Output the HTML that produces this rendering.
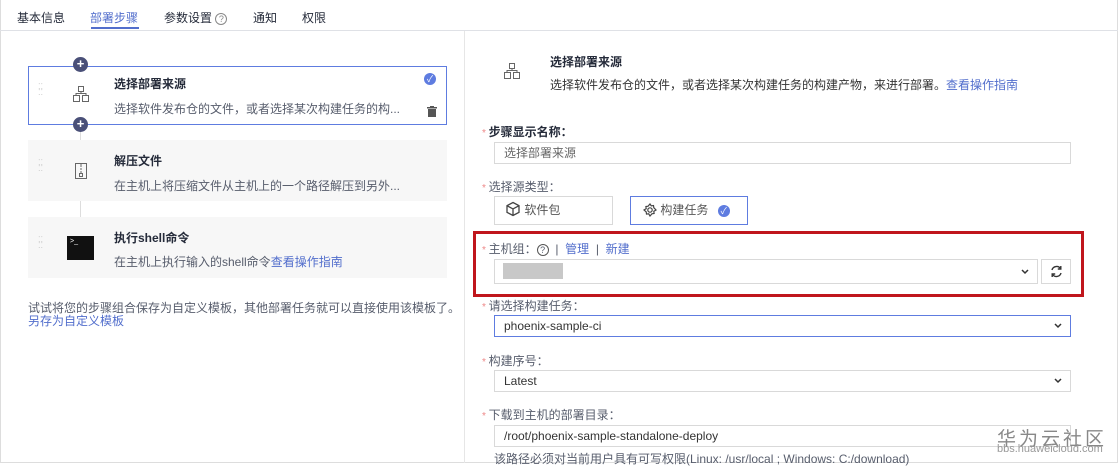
<!DOCTYPE html>
<html><head><meta charset="utf-8"><style>
*{box-sizing:border-box;margin:0;padding:0}
body{width:1118px;height:463px;overflow:hidden;background:#fff;font-family:"Liberation Sans","Noto Sans CJK SC",sans-serif;font-size:12px;color:#252b3a;position:relative}
.a{position:absolute;white-space:nowrap}
.tab{top:9px;font-size:12px;color:#252b3a}
.g{color:#575d6c}
.bl{color:#526ecc}
.inp{position:absolute;border:1px solid #d9d9d9;height:22px;background:#fff;padding-left:9px;line-height:20px;color:#333;font-size:12px}
.star{color:#e88;font-size:10px}
.lab{font-size:12px;color:#575d6c}
.chev{position:absolute;right:8px;top:50%;margin-top:-3px}
</style></head><body>
<div class="a" style="left:0;top:0;width:1118px;height:463px;border:1px solid #ddd;border-top:none"></div>
<div class="a tab" style="left:17px">基本信息</div>
<div class="a tab" style="left:90px;color:#526ecc">部署步骤</div>
<div class="a" style="left:91px;top:27px;width:48px;height:2px;background:#526ecc"></div>
<div class="a tab" style="left:164px">参数设置 <span style="display:inline-block;width:12px;height:12px;border:1px solid #888;border-radius:50%;font-size:9px;line-height:10px;text-align:center;color:#888">?</span></div>
<div class="a tab" style="left:253px">通知</div>
<div class="a tab" style="left:302px">权限</div>
<div class="a" style="left:0;top:30px;width:1118px;height:1px;background:#dfe1e6"></div>
<div class="a" style="left:464px;top:31px;width:1px;height:432px;background:#e6e6e6"></div>

<div class="a" style="left:80px;top:124px;width:1px;height:93px;background:#ddd"></div>
<div class="a" style="left:28px;top:66px;width:419px;height:59px;border:1px solid #5e7ce0;background:#fff"></div>
<div class="a" style="left:28px;top:140px;width:419px;height:61px;background:#f7f7f7"></div>
<div class="a" style="left:28px;top:217px;width:419px;height:61px;background:#f7f7f7"></div>
<div class="a" style="left:73px;top:57px;width:15px;height:15px;border-radius:50%;background:#4a5078;color:#fff;font-size:13px;line-height:14px;text-align:center;font-weight:bold">+</div>
<div class="a" style="left:73px;top:117px;width:15px;height:15px;border-radius:50%;background:#4a5078;color:#fff;font-size:13px;line-height:14px;text-align:center;font-weight:bold">+</div>
<div class="a" style="left:38px;top:84px;color:#ccc;font-size:8px;line-height:6px">⁚⁚<br>⁚⁚</div>
<div class="a" style="left:38px;top:160px;color:#ccc;font-size:8px;line-height:6px">⁚⁚<br>⁚⁚</div>
<div class="a" style="left:38px;top:237px;color:#ccc;font-size:8px;line-height:6px">⁚⁚<br>⁚⁚</div>
<svg class="a" style="left:72px;top:85px" width="18" height="18" viewBox="0 0 18 18" fill="none" stroke="#666"><rect x="6.5" y="1.5" width="5" height="5"/><rect x="1.5" y="10.5" width="6" height="6"/><rect x="10.5" y="10.5" width="6" height="6"/><path d="M9 6.5v2M4 10.5V8.5h10v2"/></svg>
<svg class="a" style="left:74px;top:162px" width="14" height="18" viewBox="0 0 14 18" fill="none" stroke="#666"><rect x="1.5" y="1.5" width="11" height="15"/><path d="M7 2v3M7 6v2M7 9v2" /><rect x="5.5" y="11.5" width="3" height="3"/></svg>
<div class="a" style="left:67px;top:236px;width:27px;height:24px;background:#111;color:#fff;font-size:7px;padding:2px 3px">&gt;_</div>
<div class="a" style="left:114px;top:75px;font-weight:bold">选择部署来源</div>
<div class="a g" style="left:114px;top:100px">选择软件发布仓的文件，或者选择某次构建任务的构...</div>
<div class="a" style="left:424px;top:73px;width:12px;height:12px;border-radius:50%;background:#5e7ce0;color:#fff;font-size:9px;line-height:12px;text-align:center">✓</div>
<svg class="a" style="left:427px;top:106px" width="10" height="11" viewBox="0 0 10 11"><rect x="0" y="1" width="10" height="1.5" fill="#555"/><rect x="3" y="0" width="4" height="1.5" fill="#555"/><rect x="1" y="3" width="8" height="8" fill="#555"/></svg>
<div class="a" style="left:114px;top:152px;font-weight:bold">解压文件</div>
<div class="a g" style="left:114px;top:177px">在主机上将压缩文件从主机上的一个路径解压到另外...</div>
<div class="a" style="left:114px;top:229px;font-weight:bold">执行shell命令</div>
<div class="a g" style="left:114px;top:253px">在主机上执行输入的shell命令<span class="bl">查看操作指南</span></div>
<div class="a g" style="left:28px;top:299px">试试将您的步骤组合保存为自定义模板，其他部署任务就可以直接使用该模板了。</div>
<div class="a bl" style="left:28px;top:312px">另存为自定义模板</div>

<svg class="a" style="left:503px;top:62px" width="18" height="18" viewBox="0 0 18 18" fill="none" stroke="#666"><rect x="6.5" y="1.5" width="5" height="5"/><rect x="1.5" y="10.5" width="6" height="6"/><rect x="10.5" y="10.5" width="6" height="6"/><path d="M9 6.5v2M4 10.5V8.5h10v2"/></svg>
<div class="a" style="left:550px;top:53px;font-weight:bold">选择部署来源</div>
<div class="a" style="left:550px;top:76px;color:#333">选择软件发布仓的文件，或者选择某次构建任务的构建产物，来进行部署。<span class="bl">查看操作指南</span></div>

<div class="a" style="left:482px;top:123px"><span class="star">* </span><b>步骤显示名称：</b></div>
<div class="inp" style="left:494px;top:142px;width:577px;color:#666">选择部署来源</div>
<div class="a lab" style="left:482px;top:178px"><span class="star">* </span>选择源类型：</div>
<div class="inp" style="left:494px;top:196px;width:119px;height:29px;line-height:27px;padding-left:10px;color:#555"><svg style="vertical-align:-3px" width="16" height="16" viewBox="0 0 16 16" fill="none" stroke="#444" stroke-width="1.3"><path d="M8 1.5l6 3.2v6.6L8 14.5 2 11.3V4.7z M2 4.7l6 3.2 6-3.2 M8 7.9v6.6"/></svg> 软件包</div>
<div class="inp" style="left:630px;top:196px;width:118px;height:29px;line-height:27px;padding-left:12px;border-color:#5e7ce0;color:#555"><svg style="vertical-align:-3px" width="14" height="14" viewBox="0 0 14 14" fill="none" stroke="#444" stroke-width="1.2"><circle cx="7" cy="7" r="2.2"/><path d="M7 1l1.3 1.8 2.2-.3.3 2.2L13 7l-2.2 1.3.3 2.2-2.2.3L7 13l-1.3-2.2-2.2.3-.3-2.2L1 7l2.2-1.3-.3-2.2 2.2-.3z"/></svg> 构建任务 <span style="display:inline-block;width:12px;height:12px;border-radius:50%;background:#5e7ce0;color:#fff;font-size:9px;line-height:12px;text-align:center;margin-left:6px">✓</span></div>

<div class="a" style="left:473px;top:231px;width:611px;height:66px;border:3px solid #c0161c"></div>
<div class="a lab" style="left:482px;top:240px"><span class="star">* </span>主机组：<span style="display:inline-block;width:12px;height:12px;border:1px solid #555;border-radius:50%;font-size:9px;line-height:10px;text-align:center">?</span> &nbsp;| &nbsp;<span class="bl">管理</span> &nbsp;| &nbsp;<span class="bl">新建</span></div>
<div class="inp" style="left:494px;top:259px;width:544px;height:25px"><div class="a" style="left:8px;top:3px;width:60px;height:16px;background:#c8c8c8"></div><svg class="chev" width="8" height="6" viewBox="0 0 8 6"><path d="M1 1l3 3 3-3" fill="none" stroke="#333" stroke-width="1.5"/></svg></div>
<div class="inp" style="left:1041px;top:259px;width:30px;height:25px;padding:0"><svg style="position:absolute;left:8px;top:5px" width="13" height="13" viewBox="0 0 13 13" fill="none" stroke="#333" stroke-width="1.4"><path d="M2 5a4.7 4.7 0 0 1 8.6-1.2M11 8a4.7 4.7 0 0 1-8.6 1.2"/><path d="M10.8 1v3h-3M2.2 12V9h3"/></svg></div>

<div class="a lab" style="left:482px;top:297px"><span class="star">* </span>请选择构建任务：</div>
<div class="inp" style="left:494px;top:315px;width:577px;border-color:#5e7ce0">phoenix-sample-ci<svg class="chev" width="8" height="6" viewBox="0 0 8 6"><path d="M1 1l3 3 3-3" fill="none" stroke="#333" stroke-width="1.5"/></svg></div>
<div class="a lab" style="left:482px;top:352px"><span class="star">* </span>构建序号：</div>
<div class="inp" style="left:494px;top:370px;width:577px">Latest<svg class="chev" width="8" height="6" viewBox="0 0 8 6"><path d="M1 1l3 3 3-3" fill="none" stroke="#333" stroke-width="1.5"/></svg></div>
<div class="a lab" style="left:482px;top:406px"><span class="star">* </span>下载到主机的部署目录：</div>
<div class="inp" style="left:494px;top:425px;width:577px">/root/phoenix-sample-standalone-deploy</div>
<div class="a lab" style="left:494px;top:450px">该路径必须对当前用户具有可写权限(Linux: /usr/local ; Windows: C:/download)</div>
<div class="a" style="left:997px;top:424px;font-size:19px;color:#888;letter-spacing:3px">华为云社区</div>
<div class="a" style="left:997px;top:443px;font-size:11px;color:#999">bbs.huaweicloud.com</div>
</body></html>
